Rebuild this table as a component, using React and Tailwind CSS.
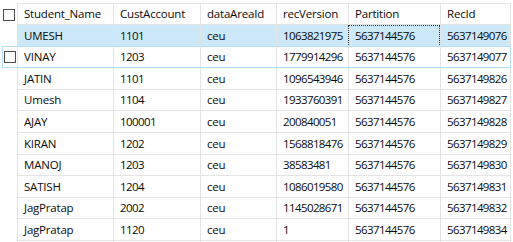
import React from "react";

const columns = [
  { key: "name", label: "Student_Name", w: "w-[96px]", num: false },
  { key: "acct", label: "CustAccount", w: "w-[87px]", num: true },
  { key: "area", label: "dataAreaId", w: "w-[76px]", num: false },
  { key: "ver", label: "recVersion", w: "w-[72px]", num: true },
  { key: "part", label: "Partition", w: "w-[92px]", num: true },
  { key: "rec", label: "RecId", w: "w-[71px] border-r", num: true },
];

const rows = [
  ["UMESH", "1101", "ceu", "1063821975", "5637144576", "5637149076"],
  ["VINAY", "1203", "ceu", "1779914296", "5637144576", "5637149077"],
  ["JATIN", "1101", "ceu", "1096543946", "5637144576", "5637149826"],
  ["Umesh", "1104", "ceu", "1933760391", "5637144576", "5637149827"],
  ["AJAY", "100001", "ceu", "200840051", "5637144576", "5637149828"],
  ["KIRAN", "1202", "ceu", "1568818476", "5637144576", "5637149829"],
  ["MANOJ", "1203", "ceu", "38583481", "5637144576", "5637149830"],
  ["SATISH", "1204", "ceu", "1086019580", "5637144576", "5637149831"],
  ["JagPratap", "2002", "ceu", "1145028671", "5637144576", "5637149832"],
  ["JagPratap", "1120", "ceu", "1", "5637144576", "5637149834"],
  ["", "", "", "", "", ""],
];

function Box() {
  return <div className="w-[12px] h-[12px] border border-[#4d4d4d] bg-white" />;
}

export default function App() {
  return (
    <div
      className="w-[513px] h-[242px] overflow-hidden bg-white pt-[3px] text-[11.5px] text-[#0a0a0a]"
      style={{ fontFamily: '"Open Sans", "Noto Sans", sans-serif' }}
    >
      {/* header */}
      <div className="flex h-[22px]">
        <div className="w-[17px] shrink-0 flex items-center pl-[3px] pt-[2px]">
          <Box />
        </div>
        {columns.map((c) => (
          <div
            key={c.key}
            className={`${c.w} shrink-0 border-l border-t border-b border-[#e4e4e4] pl-[6px] flex items-center tracking-[-0.2px]`}
          >
            {c.label}
          </div>
        ))}
      </div>

      {rows.map((r, i) => {
        const selected = i === 0;
        const hover = i === 1;
        return (
          <div key={i} className="relative flex h-[21.6px]">
            <div className="w-[17px] shrink-0 flex items-center pl-[4px]">
              {hover && <Box />}
            </div>
            {r.map((v, j) => (
              <div
                key={j}
                className={`${columns[j].w} shrink-0 border-l border-b border-[#e4e4e4] pl-[6px] flex items-center whitespace-nowrap ${
                  columns[j].num ? "tracking-[-0.6px]" : "tracking-[-0.2px]"
                } ${selected ? "bg-[#cde8f8]" : ""} ${
                  selected && j === 4
                    ? "outline outline-1 outline-dotted outline-[#333] -outline-offset-1"
                    : ""
                }`}
              >
                {v}
              </div>
            ))}
            {hover && (
              <div className="absolute left-[2px] top-[-1px] w-[509px] h-[22px] border border-[#b9dcf5] pointer-events-none" />
            )}
          </div>
        );
      })}
    </div>
  );
}
